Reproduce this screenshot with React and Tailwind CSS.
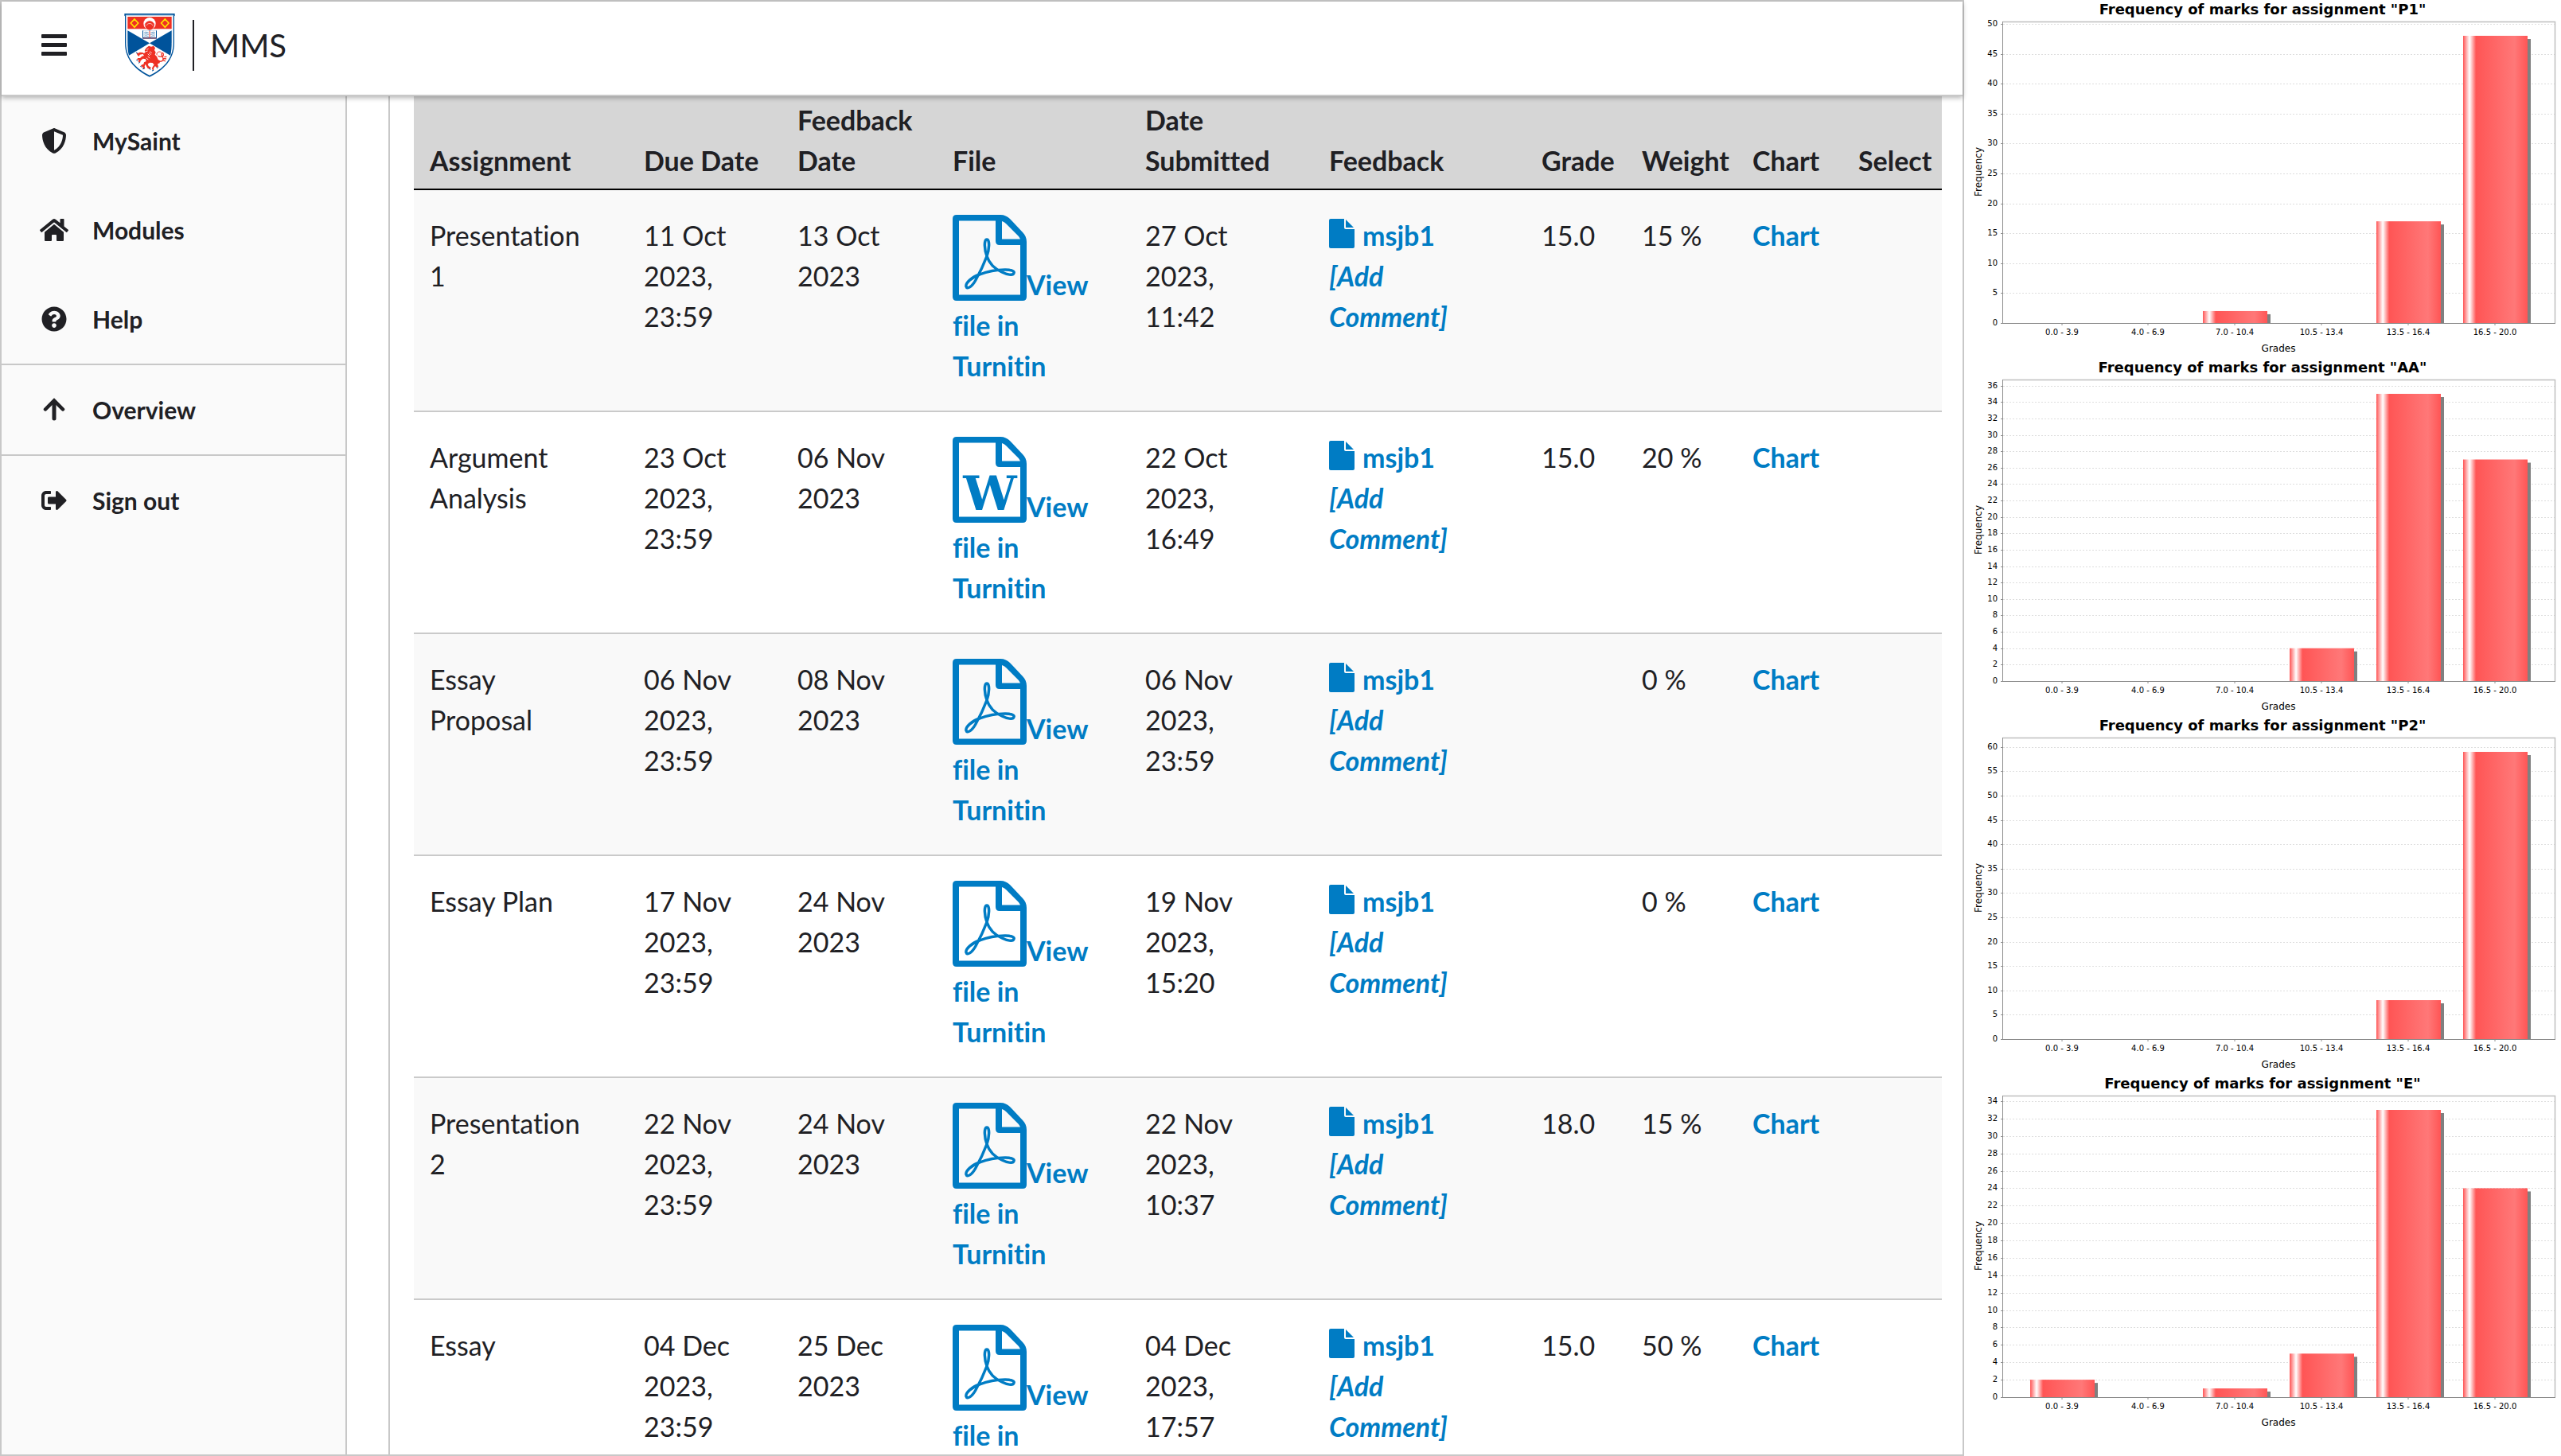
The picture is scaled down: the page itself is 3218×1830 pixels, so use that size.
import React from "react";
import { FaHome, FaQuestionCircle, FaSignOutAlt } from "react-icons/fa";
import { FaShieldHalved } from "react-icons/fa6";

const BarsIcon = () => (
  <svg viewBox="0 0 32 28" className="h-7 w-8" fill="currentColor" aria-hidden="true">
    <rect width="32" height="5" rx="1" />
    <rect y="11" width="32" height="5" rx="1" />
    <rect y="22" width="32" height="5" rx="1" />
  </svg>
);

const ArrowUpIcon = () => (
  <svg viewBox="0 0 32 32" className="size-8" fill="none" stroke="currentColor" strokeWidth="5" strokeLinecap="round" aria-hidden="true">
    <path d="M16 5.500V27" strokeWidth="5" />
    <path d="M5 15.500 16 4.500 27 15.500" strokeLinejoin="miter" strokeWidth="4.500" />
  </svg>
);

const Crest = () => (
  <svg viewBox="0 0 190 240" className="h-20 w-16" role="img" aria-label="University crest">
    <path d="M0 0H190V8L188 10V110C188 178 144 214 95 239C46 214 2 178 2 110V10L0 8Z" fill="#00539b" />
    <path d="M6 5H184V110C184 174 142 210 95 233C48 210 6 174 6 110Z" fill="#fff" />
    <path d="M8 7H182" stroke="#00539b" strokeWidth="2" opacity=".5" />
    <rect x="12" y="12" width="166" height="46" fill="#ee3124" />
    <path d="M12 64L95 112L17 158C13 145 12 125 12 110Z" fill="#00539b" />
    <path d="M178 64L95 112L173 158C177 145 178 125 178 110Z" fill="#00539b" />
    <path d="M38 21L52 36L38 52L24 36Z M153 21L167 36L153 52L139 36Z" fill="none" stroke="#ffe600" strokeWidth="5" />
    <circle cx="95" cy="38" r="23" fill="#fff" />
    <circle cx="95" cy="45" r="17" fill="#ee3124" />
    <path d="M77 44C77 26 113 26 113 44" fill="none" stroke="#ee3124" strokeWidth="2" />
    <path d="M84 45C86 35 104 35 106 45" fill="none" stroke="#fff" strokeWidth="2" />
    <rect x="68" y="64" width="54" height="31" fill="#00539b" />
    <path d="M71 64H92L95 67L98 64H119V90H71Z" fill="#fff" />
    <path d="M75 71C80 69 86 70 91 73M75 78C80 76 86 77 91 80M75 85C80 83 86 84 91 87M115 71C110 69 104 70 99 73M115 78C110 76 104 77 99 80M115 85C110 83 104 84 99 87" fill="none" stroke="#00539b" strokeWidth="2" />
    <path d="M95 66V94" stroke="#ee3124" strokeWidth="3" />
    <path d="M70 93H93M98 93H121" stroke="#ee3124" strokeWidth="2" />
    <g fill="#ee3124">
      <path d="M84 128L92 122L101 125L110 122L116 130L113 138L118 146L115 155L122 162L127 174L134 178L133 187L125 190L128 200L121 204L116 198L110 206L111 214L104 211L105 203L112 193L106 186L96 185L88 190L91 198L100 203L98 209L88 207L83 199L79 191L76 199L78 206L70 207L68 201L61 198L66 193L72 191L74 184L82 180L80 172L70 170L61 178L59 186L53 182L54 175L46 173L51 168L59 168L66 161L74 159L70 153L58 155L55 162L49 157L45 149L52 149L58 146L68 147L74 150L80 145L76 141L79 134Z" />
      <path d="M126 180C149 184 149 171 143 162C134 149 148 143 147 156C147 165 135 164 127 160M145 169L158 171M150 164L159 163M146 176L155 180" fill="none" stroke="#ee3124" strokeWidth="4" />
      <path d="M124 157C116 150 132 137 141 149" fill="none" stroke="#ee3124" strokeWidth="3" />
    </g>
    <path d="M84 136L91 133M80 143L88 141M88 152L95 159M92 148L100 155M96 143L103 149M88 162L96 168M82 168L90 174" stroke="#fff" strokeWidth="2.500" />
    <path d="M44 146L50 151M45 175L51 179M53 187L58 184M60 199L65 202M69 209L76 208M99 211L93 208M104 216L110 214M122 207L127 202" stroke="#00539b" strokeWidth="3" />
  </svg>
);

const FileFrame = ({ children, label }) => (
  <svg viewBox="0 0 93 108" className="inline-block h-[108px] w-[93px] align-[-7px]" role="img" aria-label={label}>
    <path
      fill="currentColor"
      fillRule="evenodd"
      d="M5 0H60C65 0 69 2 72 5L88 22C91 25 93 29 93 34V103Q93 108 88 108H5Q0 108 0 103V5Q0 0 5 0ZM8 7.500V100.500H85V38H59Q54 38 54 33V7.500ZM62 8V30.500H85Q84 28 82 26L67 11Q65 9 62 8Z"
    />
    {children}
  </svg>
);

const PdfIcon = () => (
  <FileFrame label="PDF file">
    <path
      d="M43 52C40 44 39 31 43 31C47 31 46 44 43 52C40 60 34 73 29 82C24 91 18 94 17 90C16 86 24 78 34 75C44 71 56 69 66 69C74 69 78 71 77 73C76 77 68 75 62 72C53 68 46 61 43 52Z"
      fill="none"
      stroke="currentColor"
      strokeWidth="3.500"
      strokeLinejoin="round"
    />
  </FileFrame>
);

const WordIcon = () => (
  <FileFrame label="Word file">
    <text x="47" y="92" textAnchor="middle" fill="currentColor" className="font-['DejaVu_Serif'] text-[60px] font-bold">
      W
    </text>
  </FileFrame>
);

const FeedbackIcon = () => (
  <svg viewBox="0 0 32 37" className="mr-[10px] inline-block h-[37px] w-8 align-[-3px]" fill="currentColor" aria-hidden="true">
    <path d="M2 0H19V11Q19 13 21 13H32V35Q32 37 30 37H2Q0 37 0 35V2Q0 0 2 0Z" />
    <path d="M21 1L31 11H21Z" />
  </svg>
);

const columns = [
  ["Assignment", "w-[269px]"],
  ["Due Date", "w-[193px]"],
  ["Feedback\nDate", "w-[195px]"],
  ["File", "w-[242px]"],
  ["Date\nSubmitted", "w-[231px]"],
  ["Feedback", "w-[267px]"],
  ["Grade", "w-[126px]"],
  ["Weight", "w-[139px]"],
  ["Chart", "w-[133px]"],
  ["Select", "w-[125px]"],
];

const rows = [
  { name: "Presentation\n1", due: "11 Oct\n2023,\n23:59", feedback: "13 Oct\n2023", type: "pdf", submitted: "27 Oct\n2023,\n11:42", grade: "15.0", weight: "15 %" },
  { name: "Argument\nAnalysis", due: "23 Oct\n2023,\n23:59", feedback: "06 Nov\n2023", type: "word", submitted: "22 Oct\n2023,\n16:49", grade: "15.0", weight: "20 %" },
  { name: "Essay\nProposal", due: "06 Nov\n2023,\n23:59", feedback: "08 Nov\n2023", type: "pdf", submitted: "06 Nov\n2023,\n23:59", grade: "", weight: "0 %" },
  { name: "Essay Plan", due: "17 Nov\n2023,\n23:59", feedback: "24 Nov\n2023", type: "pdf", submitted: "19 Nov\n2023,\n15:20", grade: "", weight: "0 %" },
  { name: "Presentation\n2", due: "22 Nov\n2023,\n23:59", feedback: "24 Nov\n2023", type: "pdf", submitted: "22 Nov\n2023,\n10:37", grade: "18.0", weight: "15 %" },
  { name: "Essay", due: "04 Dec\n2023,\n23:59", feedback: "25 Dec\n2023", type: "pdf", submitted: "04 Dec\n2023,\n17:57", grade: "15.0", weight: "50 %" },
];

const link = "font-bold text-[#007cc4]";

const Cell = ({ children }) => <td className="py-[31px] pl-5 align-top whitespace-pre">{children}</td>;

const AssignmentTable = () => (
  <table className="w-full table-fixed border-collapse text-left text-[34px] leading-[51px] [font-variant-ligatures:none]">
    <thead>
      <tr className="border-b-2 border-black bg-[#d6d6d6]">
        {columns.map(([name, width], i) => (
          <th key={i} scope="col" className={`${width} pt-1 pb-[10px] pl-5 align-bottom font-bold whitespace-pre`}>
            {name}
          </th>
        ))}
      </tr>
    </thead>
    <tbody>
      {rows.map((r) => (
        <tr key={r.name} className="border-b-2 border-[#cacaca] odd:bg-[#f9f9f9]">
          <Cell>{r.name}</Cell>
          <Cell>{r.due}</Cell>
          <Cell>{r.feedback}</Cell>
          <Cell>
            <a href="#file" className={link}>
              {r.type === "pdf" ? <PdfIcon /> : <WordIcon />}
              {"View\nfile in\nTurnitin"}
            </a>
          </Cell>
          <Cell>{r.submitted}</Cell>
          <Cell>
            <a href="#feedback" className={link}>
              <FeedbackIcon />
              msjb1
            </a>
            <br />
            <a href="#comment" className={`${link} italic`}>
              {"[Add\nComment]"}
            </a>
          </Cell>
          <Cell>{r.grade}</Cell>
          <Cell>{r.weight}</Cell>
          <Cell>
            <a href="#chart" className={link}>
              Chart
            </a>
          </Cell>
          <Cell />
        </tr>
      ))}
    </tbody>
  </table>
);

const NavItem = ({ icon, children }) => (
  <a href="#nav" className="flex h-28 items-center pl-[46px]">
    <span className="flex w-10 justify-center">{icon}</span>
    <span className="ml-7">{children}</span>
  </a>
);

const Sidebar = () => (
  <nav className="w-[434px] shrink-0 border-r-2 border-[#c8c8c8] bg-[#fafafa] text-[30px] font-bold">
    <NavItem icon={<FaShieldHalved className="size-8" />}>MySaint</NavItem>
    <NavItem icon={<FaHome className="h-8 w-9" />}>Modules</NavItem>
    <NavItem icon={<FaQuestionCircle className="size-8" />}>Help</NavItem>
    <div className="border-y-2 border-[#c8c8c8]">
      <NavItem icon={<ArrowUpIcon />}>Overview</NavItem>
    </div>
    <NavItem icon={<FaSignOutAlt className="size-8" />}>Sign out</NavItem>
  </nav>
);

const bins = ["0.0 - 3.9", "4.0 - 6.9", "7.0 - 10.4", "10.5 - 13.4", "13.5 - 16.4", "16.5 - 20.0"];

const charts = [
  { name: "P1", step: 5, top: 50, values: [0, 0, 2, 0, 17, 48] },
  { name: "AA", step: 2, top: 36, values: [0, 0, 0, 4, 35, 27] },
  { name: "P2", step: 5, top: 60, values: [0, 0, 0, 0, 8, 59] },
  { name: "E", step: 2, top: 34, values: [2, 0, 1, 5, 33, 24] },
];

const Chart = ({ name, step, top, values }) => {
  const base = 406;
  const unit = 361 / Math.max(...values);
  const ticks = Array.from({ length: top / step + 1 }, (_, i) => i * step);
  const centre = (i) => Math.round(123.5 + i * 108.8);
  return (
    <svg viewBox="1 0 750 450" className="block w-full font-['DejaVu_Sans']" role="img" aria-label={`Frequency of marks for assignment ${name}`}>
      <defs>
        <linearGradient id={`bar-${name}`}>
          <stop offset="0" stopColor="#ff5555" />
          <stop offset="0.1" stopColor="#ffffff" />
          <stop offset="0.2" stopColor="#ff5555" />
          <stop offset="0.8" stopColor="#ff7878" />
          <stop offset="1" stopColor="#ff5555" />
        </linearGradient>
      </defs>
      <text x="376" y="18" textAnchor="middle" className="text-[18px] font-bold">
        {`Frequency of marks for assignment "${name}"`}
      </text>
      {ticks.map((t) => {
        const y = Math.round(base - t * unit) + 0.5;
        return (
          <g key={t}>
            <path d={`M50 ${y}H744`} stroke="#dedede" strokeDasharray="2 2" />
            <path d={`M47 ${y}H50`} stroke="#909090" />
            <text x="43" y={y + 2.5} textAnchor="end" className="text-[10px]">
              {t}
            </text>
          </g>
        );
      })}
      <path d="M50 27.500H743.500V406" fill="none" stroke="#bfbfbf" strokeWidth="1.500" />
      {values.map((v, i) => {
        const h = v * unit;
        return v > 0 ? (
          <g key={i}>
            <rect x={centre(i) - 36} y={base - h + 4} width="81" height={h - 4} fill="#808080" />
            <rect x={centre(i) - 40} y={base - h} width="81" height={h} fill={`url(#bar-${name})`} />
          </g>
        ) : null;
      })}
      <path d="M49.500 27V406.500H744" fill="none" stroke="#8a8a8a" />
      {bins.map((b, i) => (
        <g key={b}>
          <path d={`M${centre(i)} 407V409`} stroke="#909090" />
          <text x={centre(i)} y="421" textAnchor="middle" className="text-[10px]">
            {b}
          </text>
        </g>
      ))}
      <text x="396" y="442" textAnchor="middle" className="text-[12px]">
        Grades
      </text>
      <text transform="translate(23 216) rotate(-90)" textAnchor="middle" className="text-[12px]">
        Frequency
      </text>
    </svg>
  );
};

export default function App() {
  return (
    <div className="flex h-screen overflow-hidden bg-white font-['Lato',sans-serif] text-[#202024]">
      <div className="flex min-w-0 flex-1 flex-col border-2 border-[#c8c8c8]">
        <header className="relative z-10 flex h-[119px] shrink-0 items-center border-b-2 border-[#c8c8c8] bg-white pb-2 shadow-[0_2px_6px_rgba(0,0,0,0.3)]">
          <button type="button" aria-label="Menu" className="ml-[50px]">
            <BarsIcon />
          </button>
          <div className="ml-[72px] flex items-center">
            <Crest />
            <div className="ml-[22px] h-16 w-[2px] bg-[#202024]" />
            <h1 className="ml-5 text-[40px] leading-[48px]">MMS</h1>
          </div>
        </header>
        <div className="flex min-h-0 flex-1">
          <Sidebar />
          <main className="ml-[52px] min-w-0 flex-1 overflow-hidden border-l-2 border-[#c8c8c8] pr-[26px] pl-[30px]">
            <AssignmentTable />
          </main>
        </div>
      </div>
      <aside className="w-[750px] shrink-0">
        {charts.map((c) => (
          <Chart key={c.name} {...c} />
        ))}
      </aside>
    </div>
  );
}
